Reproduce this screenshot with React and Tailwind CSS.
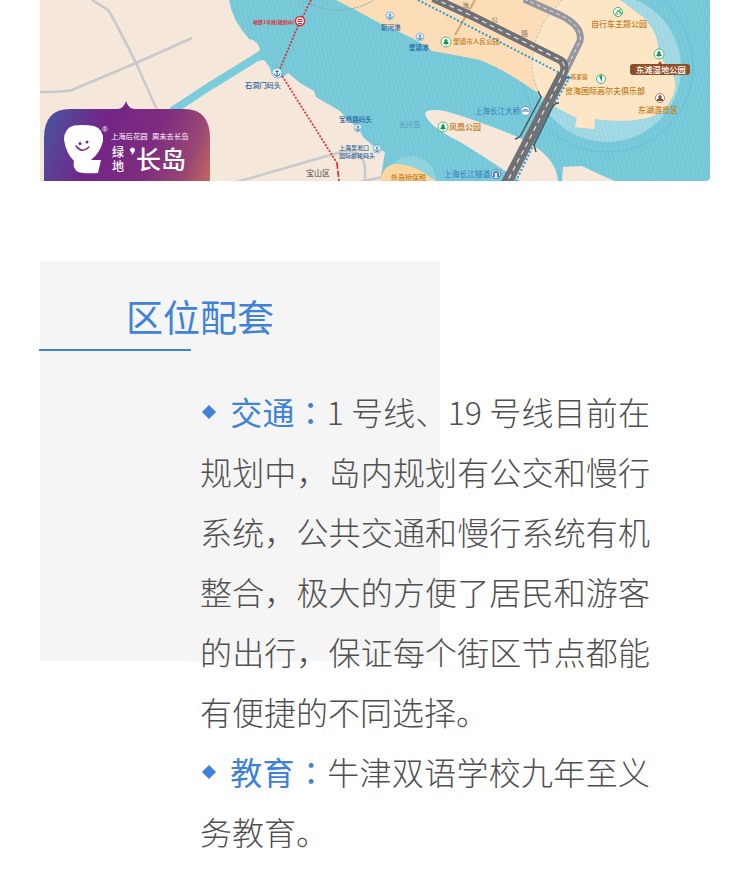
const anchors = [[277, 73, 5], [358, 128, 4], [377, 149, 4], [390, 16, 4], [420, 37, 4]];
const trees = [[446, 42], [443, 127], [659, 54]];

function Anchor({ x, y, r }) {
  return (
    <g transform={`translate(${x} ${y}) scale(${r / 5})`}>
      <circle r="5" fill="#eaf5fb" stroke="#5f9fc9" strokeWidth="0.8" />
      <path d="M0-3V3M-1.5-1.5H1.5M-3 .5Q-2.500 3 0 3.200Q2.500 3 3 .5" fill="none" stroke="#2563a5" strokeWidth="1" />
    </g>
  );
}

function Tree({ x, y }) {
  return (
    <g transform={`translate(${x} ${y})`}>
      <circle r="5" fill="#fff" stroke="#45b06c" strokeWidth="0.9" />
      <path d="M0-3.500L2-.8H1.200L3 2H.5V3.500H-.5V2H-3L-1.200-.8H-2Z" fill="#12994b" />
    </g>
  );
}

function LocationMap() {
  return (
    <svg
      viewBox="40 0 670 181"
      className="block w-full rounded-b font-['Noto_Sans_CJK_SC',sans-serif]"
      role="img"
      aria-label="绿地长岛区位图"
    >
      <defs>
        <pattern id="waves" width="4" height="12" patternUnits="userSpaceOnUse" patternTransform="rotate(-14)">
          <path d="M1 0V12" stroke="#62b6c6" strokeWidth="0.9" opacity="0.6" />
        </pattern>
        <linearGradient id="badge" x1="44" y1="120" x2="215" y2="185" gradientUnits="userSpaceOnUse">
          <stop offset="0" stopColor="#4a53a0" />
          <stop offset="0.32" stopColor="#742487" />
          <stop offset="0.62" stopColor="#7f2d80" />
          <stop offset="0.82" stopColor="#984674" />
          <stop offset="1" stopColor="#cb7058" />
        </linearGradient>
      </defs>

      <rect x="40" width="670" height="181" fill="#7accdb" />
      <rect x="40" width="670" height="181" fill="url(#waves)" />

      <path d="M40 0H229Q232 20 249 39Q257 40 260 49L258 61L264 60L269 66L272 74L282 78L288 73L300 83L314 91L316 97L340 111L350 122L358 127L363 137L373 146L385 152L380 181H40Z" fill="#f5e8da" />
      <path d="M262 54L210 86L172 111" fill="none" stroke="#7accdb" strokeWidth="8" />
      <path d="M92 0L108 10Q111 13 136 63L158 112M40 92Q65 92 72 90L136 63L192 38M230 184L320 158L345 151Q364 151 365 168V181M350 184L382 177" fill="none" stroke="#c8c9cc" strokeWidth="2.500" />

      <circle cx="411" cy="181" r="25" fill="#bfe5ec" opacity="0.35" />
      <path d="M380 181Q383 166 394 164Q407 163 423 172L436 181Z" fill="#fcd5a0" />

      <circle cx="607" cy="68" r="74" fill="#a6dbe6" />
      <circle cx="607" cy="66" r="86" fill="none" stroke="#58b9d2" strokeWidth="1" strokeDasharray="2 1" />
      <circle cx="607" cy="68" r="74" fill="url(#waves)" opacity="0.5" />
      <path d="M336 0Q360 12 383 25Q420 40 432 51Q450 54 480 60Q510 72 543 97L552 105L577 118L575 127L594 129L595 119Q625 122 640 119Q668 116 675 89Q676 75 664 63L658 50Q659 35 644 18L620 0Z" fill="#fcddb7" />
      <path d="M562 0Q532 30 532 65Q533 80 540 94L552 105L577 118L575 127L594 129L595 119Q625 122 640 119Q668 116 675 89Q676 75 664 63L658 50Q659 35 644 18L620 0Z" fill="#fde6c5" />
      <path d="M562 0Q532 30 532 65Q533 80 540 96" fill="none" stroke="#a4d1cf" strokeWidth="1.200" strokeDasharray="2 2" />
      <path d="M302 0Q340 20 374 0" fill="none" stroke="#78abb6" strokeDasharray="2 1" />

      <path d="M425 113Q428 108 445 111Q480 121 520 138Q556 155 558 181H520Q485 157 460 142Q426 125 425 113Z" fill="#f5e8da" />
      <path d="M562 181L563 167L582 166Q600 175 615 181Z" fill="#f5e8da" />
      <path d="M475 0L455 35" stroke="#d4a56e" strokeWidth="2" />

      <path d="M524 -1L562 16Q583 27 580 41L563 76" fill="none" stroke="#96989d" strokeWidth="7" />
      <path d="M524 -1L562 16Q583 27 580 41L563 76" fill="none" stroke="#e3e3e3" strokeWidth="1" strokeDasharray="4 3" />
      <path d="M433 -2L470 15L560 60Q567 64 563 74L506 184" fill="none" stroke="#707174" strokeWidth="8" />
      <path d="M563 74L506 184" stroke="#707174" strokeWidth="11" />
      <path d="M433 -2L470 15L560 60Q567 64 563 74L506 184" fill="none" stroke="#e8e8e8" strokeWidth="1.200" strokeDasharray="5 4" />
      <path d="M418 0L558 72M570 77L550 111L516 181" fill="none" stroke="#269ad5" strokeWidth="2" strokeDasharray="2 2" />
      <path d="M538 91L541 97L522 133Q520 138 515 139M559 103Q554 103 552 108L534 145L536 152" fill="none" stroke="#4c565a" strokeWidth="1.500" />

      <path d="M311 0L298 26L279 71L337 163" fill="none" stroke="#e02b32" strokeWidth="1.700" strokeDasharray="2 1.500" />
      <path d="M337 163L339 181" stroke="#e02b32" strokeWidth="1.700" strokeDasharray="6 2" />
      <circle cx="300" cy="21" r="4.500" fill="#fff" stroke="#e02b32" strokeWidth="1.500" />
      <path d="M298 21.500V19.500H302V21.500ZM298 23.500H302" fill="none" stroke="#e02b32" />

      {anchors.map(([x, y, r]) => <Anchor key={`${x}-${y}`} x={x} y={y} r={r} />)}
      {trees.map(([x, y]) => <Tree key={`${x}-${y}`} x={x} y={y} />)}
      <circle cx="618" cy="12" r="4.500" fill="#fff" stroke="#45b06c" />
      <path d="M615.500 13.500A1 1 0 1 0 616 13L618 11L620 13A1 1 0 1 0 620.500 12.500L619 10H621M617 10L618 11H620" fill="none" stroke="#12994b" strokeWidth="0.700" />
      <circle cx="601" cy="79" r="4.500" fill="#fff" stroke="#45b06c" />
      <path d="M599 76L602 75V82L600 78Z" fill="#12994b" />
      <circle cx="660" cy="98" r="4.500" fill="#fff" stroke="#a57f64" />
      <path d="M660 94.500L662 97H661.500V99H663V101H657V99H658.500V97H658Z" fill="#7b5035" />
      <circle cx="525.500" cy="111" r="4.500" fill="#fff" stroke="#6496cb" />
      <path d="M522 111H529M523.500 110Q525.500 108 527.500 110" fill="none" stroke="#3c72b6" />
      <circle cx="496" cy="174" r="4.500" fill="#e6effa" stroke="#5280bd" />
      <path d="M494 177V173Q496 170 498 173V177" fill="none" stroke="#2e5ea3" strokeWidth="1.500" />
      <path d="M566 77.500L569 76V79ZM569 77.500H572" fill="#1a88d1" stroke="#1a88d1" />

      <g fill="#1f5f9f" fontWeight="500">
        <text x="245" y="88" fontSize="7.200">石洞门码头</text>
        <text x="339" y="122" fontSize="6.600">宝杨路码头</text>
        <text x="339" y="150" fontSize="6">上海吴淞口</text>
        <text x="339" y="158" fontSize="6">国际邮轮码头</text>
        <text x="381" y="30" fontSize="6.500">新河港</text>
        <text x="409" y="50" fontSize="6.500">堡镇港</text>
      </g>
      <g fill="#357abd">
        <text x="399" y="127" fontSize="7" fill="#5694bd">长兴岛</text>
        <text x="475" y="114" fontSize="7.500">上海长江大桥</text>
        <text x="444" y="177" fontSize="7.700">上海长江隧道</text>
      </g>
      <text x="253" y="24" fontSize="5" fontWeight="700" fill="#e02b32">地铁1号线(规划中)</text>
      <text x="306" y="176" fontSize="8" fill="#444">宝山区</text>
      <g fill="#c47c1d" fontWeight="500">
        <text x="453" y="44" fontSize="6.600">堡镇市人民公园</text>
        <text x="449" y="130" fontSize="8">凤凰公园</text>
        <text x="391" y="180" fontSize="7">外高桥保税</text>
        <text x="591" y="27" fontSize="8">自行车主题公园</text>
        <text x="571" y="79" fontSize="5.500">陈家镇</text>
        <text x="565" y="94" fontSize="8">览海国际高尔夫俱乐部</text>
        <text x="638" y="113" fontSize="8">东湖游览区</text>
      </g>
      <g fill="#887b6b" fontSize="7">
        <text x="462" y="8">海</text>
        <text x="491" y="22">公</text>
        <text x="521" y="36">路</text>
      </g>
      <path d="M658 64L660 61L662 64Z" fill="#8f4f25" />
      <rect x="630" y="64" width="60" height="11" rx="3" fill="#8f4f25" />
      <text x="636" y="73" fontSize="8.300" fontWeight="500" fill="#fff">东滩湿地公园</text>

      <path d="M44 181V138Q44 109 70 109H118Q124 108 126 101Q128 108 134 109H184Q210 109 210 138V181Z" fill="url(#badge)" />
      <path d="M74 125.500Q84 124.500 94 126Q104 129 103 141Q100 153 91 160H101L98 173Q84 174 78 172Q72 168 74 161Q66 153 64 140Q64 128 74 125.500Z" fill="#fff" />
      <path d="M76 146Q82 154 89 147" fill="none" stroke="#762687" strokeWidth="1.500" strokeLinecap="round" />
      <circle cx="80" cy="143.500" r="1.500" fill="#762687" />
      <circle cx="87" cy="142" r="1.500" fill="#762687" />
      <g fill="#fff">
        <text x="102" y="132" fontSize="8" className="font-['Liberation_Sans',sans-serif]">®</text>
        <text x="111" y="139" fontSize="7.300">上海后花园</text>
        <text x="152" y="139" fontSize="7.300">周末去长岛</text>
        <text x="112" y="157" fontSize="12" fontWeight="500">绿</text>
        <text x="112" y="171" fontSize="12" fontWeight="500">地</text>
        <text x="136" y="169" fontSize="25" fontWeight="500">长岛</text>
        <path d="M130 149Q132 146 135 149Q135 153 131 155Q133 152 130 151Z" />
      </g>
    </svg>
  );
}

function Topic({ title, children }) {
  return (
    <p>
      <span className="ml-1 mr-4 inline-block size-[10px] -translate-y-2 rotate-45 bg-[#4082d9]" />
      <strong className="font-normal text-[#4082d9]">{title}</strong>
      <span className="font-['Noto_Sans_CJK_TC',sans-serif] font-normal text-[#4082d9]" lang="zh-TW">：</span>
      {children}
    </p>
  );
}

export default function App() {
  return (
    <main className="bg-white px-10 font-['Noto_Sans_CJK_SC',sans-serif]" lang="zh-CN">
      <LocationMap />
      <section className="mt-20 grid">
        <div className="col-start-1 row-start-1 size-[400px] bg-[#f5f5f5]" />
        <div className="col-start-1 row-start-1">
          <h2 className="-ml-px flex h-[90px] w-[152px] items-end justify-end whitespace-nowrap border-b-2 border-[#4082d9]">
            <span className="-mr-[83px] text-[37px] font-normal leading-[66px] text-[#4082d9]">区位配套</span>
          </h2>
          <div className="mt-[30px] pl-40 pr-[60px] text-justify text-[32px] font-light leading-[60px] text-[#505050]">
            <Topic title="交通">
              1 号线、19 号线目前在规划中，岛内规划有公交和慢行系统，公共交通和慢行系统有机整合，极大的方便了居民和游客的出行，保证每个街区节点都能有便捷的不同选择。
            </Topic>
            <Topic title="教育">牛津双语学校九年至义务教育。</Topic>
          </div>
        </div>
      </section>
    </main>
  );
}
